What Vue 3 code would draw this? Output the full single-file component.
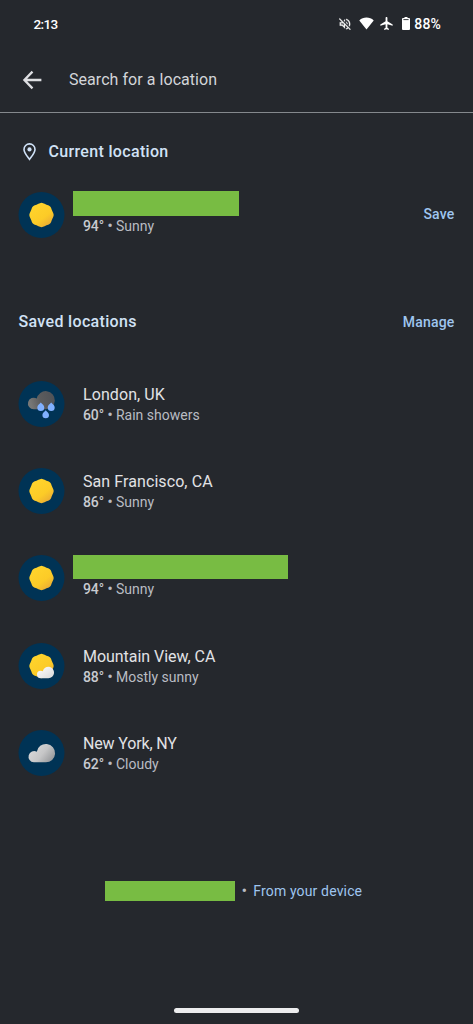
<script setup>
const sunPath = (() => {
  const pts = []
  for (let i = 0; i < 96; i++) {
    const a = (i / 96) * Math.PI * 2 - Math.PI / 2
    const r = 11.8 + 0.35 * Math.cos(8 * (a + Math.PI / 2))
    pts.push(`${(23 + r * Math.cos(a)).toFixed(2)} ${(23 + r * Math.sin(a)).toFixed(2)}`)
  }
  return `M${pts.join('L')}Z`
})()

const current = { kind: 'sun', temp: '94°', text: 'Sunny', w: 'w166' }
const saved = [
  { kind: 'rain', name: 'London, UK', temp: '60°', text: 'Rain showers', cls: 'london' },
  { kind: 'sun', name: 'San Francisco, CA', temp: '86°', text: 'Sunny', cls: 'sf' },
  { kind: 'sun', temp: '94°', text: 'Sunny', w: 'w215' },
  { kind: 'partly', name: 'Mountain View, CA', temp: '88°', text: 'Mostly sunny', cls: 'mv' },
  { kind: 'cloud', name: 'New York, NY', temp: '62°', text: 'Cloudy', cls: 'ny' },
]
</script>

<template>
  <div class="screen">
    <svg class="defs" width="0" height="0">
      <defs>
        <linearGradient id="gSun" x1="0.2" y1="0.1" x2="0.85" y2="0.95">
          <stop offset="0" stop-color="#ffd42c" /><stop offset="0.6" stop-color="#fccb27" /><stop offset="1" stop-color="#e9a936" />
        </linearGradient>
        <linearGradient id="gDark" gradientUnits="userSpaceOnUse" x1="12" y1="22" x2="36" y2="16">
          <stop offset="0" stop-color="#777776" /><stop offset="0.4" stop-color="#5c5c5d" /><stop offset="1" stop-color="#505257" />
        </linearGradient>
        <linearGradient id="gCloud" gradientUnits="userSpaceOnUse" x1="14" y1="16" x2="34" y2="32">
          <stop offset="0" stop-color="#d9d9da" /><stop offset="0.5" stop-color="#c6c6c7" /><stop offset="1" stop-color="#929497" />
        </linearGradient>
        <linearGradient id="gWhite" x1="0" y1="0" x2="1" y2="1">
          <stop offset="0" stop-color="#ffffff" /><stop offset="1" stop-color="#d8d8d8" />
        </linearGradient>
      </defs>
    </svg>

    <header class="status">
      <span class="time">2:13</span>
      <div class="tray">
        <svg class="mute" width="14" height="14" viewBox="0 0 24 24" fill="#f1f1f1" stroke="#f1f1f1" stroke-width="0.4">
          <path d="M3 2.2 1.7 3.5 7 8.8H3v6h4l5 5v-6.1l4.3 4.3c-.7.5-1.4.9-2.3 1.1v2.1c1.4-.3 2.6-1 3.7-1.8l2.8 2.8 1.3-1.3zM10 15l-2.2-2.2H5v-2h4l1 1zM12 4 9.9 6.1 12 8.2zM14 3.2v2.1c2.9.9 5 3.5 5 6.7 0 .9-.2 1.8-.5 2.6l1.5 1.5c.6-1.2 1-2.6 1-4.100 0-4.300-3-7.900-7-8.800zM14 8v2.200l2.400 2.400.1-.6c0-1.800-1-3.300-2.500-4z" />
        </svg>
        <svg class="wifi" width="15" height="13" viewBox="0 0 15 13" fill="#fff"><path d="M7.5 12.5.3 3.4C2.3 1.500 4.700.6 7.500.6s5.200.9 7.200 2.800z" /></svg>
        <svg class="plane" width="13" height="13" viewBox="2 2 20 20" fill="#fff"><path d="M21.500 15.500v-2L13.400 8.500V3.500C13.400 2.700 12.800 2 12 2s-1.400.7-1.400 1.500v5L2.500 13.500v2l8.100-2.500v5.500l-2.200 1.600V22l3.600-1 3.600 1v-1.900l-2.200-1.600V13z" /></svg>
        <svg class="battery" width="8" height="13" viewBox="0 0 8 13" fill="#fff"><path d="M2.500 0h3v1H7a1 1 0 0 1 1 1v10a1 1 0 0 1-1 1H1a1 1 0 0 1-1-1V2a1 1 0 0 1 1-1h1.500z" /><path d="M1.400 2.600h5.200" stroke="#25282d" stroke-width="0.9" /></svg>
        <span class="pct">88%</span>
      </div>
    </header>

    <div class="search">
      <svg class="back" width="20" height="20" viewBox="0 0 20 20" fill="none" stroke="#dedfe2" stroke-width="2.3"><path d="M10.500 1.600 2.400 10l8.100 8.400M2.200 10h17.200" /></svg>
      <span class="placeholder">Search for a location</span>
    </div>

    <div class="heading first">
      <svg class="pin" width="13" height="18" viewBox="0 0 13 18" fill="none"><path d="M6.500.9A5.500 5.500 0 0 0 1 6.400c0 3.300 2.900 6.300 5.500 9.900 2.600-3.600 5.500-6.600 5.500-9.900A5.500 5.500 0 0 0 6.500.9z" stroke="#cfe1f7" stroke-width="1.6" /><circle cx="6.5" cy="6.4" r="2.1" fill="#cfe1f7" /></svg>
      <h2>Current location</h2>
    </div>

    <div class="row current">
      <svg class="icon" width="47" height="46" viewBox="-0.5 0 47 46"><circle cx="23" cy="23" r="23" fill="#003355" /><path :d="sunPath" fill="url(#gSun)" /></svg>
      <div class="info">
        <div class="name"><div class="block" :class="current.w"></div></div>
        <div class="sub"><b>{{ current.temp }}</b><i>•</i><span>{{ current.text }}</span></div>
      </div>
      <a class="link save">Save</a>
    </div>

    <div class="heading second">
      <h2>Saved locations</h2>
      <a class="link">Manage</a>
    </div>

    <div class="list">
      <div v-for="(r, i) in saved" :key="i" class="row">
        <svg class="icon" width="47" height="46" viewBox="-0.5 0 47 46">
          <circle cx="23" cy="23" r="23" fill="#003355" />
          <path v-if="r.kind === 'sun' || r.kind === 'partly'" :d="sunPath" fill="url(#gSun)" />
          <path v-if="r.kind === 'partly'" d="M22.2 35.2a3.7 3.7 0 0 1 0-7.4c.8 0 1.5.2 2.1.5a5.7 5.7 0 1 1 5.5 6.9z" fill="url(#gWhite)" />
          <path v-if="r.kind === 'cloud'" d="M15.300 32.300a5.600 5.600 0 1 1 3-10.500 9.200 9.200 0 1 1 8.900 10.500z" fill="url(#gCloud)" />
          <g v-if="r.kind === 'rain'">
            <path d="M15.300 28.300a5.800 5.800 0 1 1 3-10.700 9.100 9.100 0 1 1 8.900 10.700z" fill="url(#gDark)" />
            <g fill="#80b0ff">
              <path d="M22.300 21.500c1.500 1.700 3.500 3 3.500 4.900a3.500 3.500 0 0 1-7 0c0-1.900 2-3.200 3.500-4.900z" />
              <path d="M32.700 21.500c1.500 1.700 3.500 3 3.500 4.900a3.500 3.500 0 0 1-7 0c0-1.900 2-3.200 3.500-4.900z" />
              <path d="M27.200 29.200c1.500 1.700 3.300 3 3.300 4.700a3.300 3.300 0 0 1-6.600 0c0-1.700 1.800-3 3.300-4.700z" />
            </g>
          </g>
        </svg>
        <div class="info">
          <div class="name" :class="r.cls"><template v-if="r.name">{{ r.name }}</template><div v-else class="block" :class="r.w"></div></div>
          <div class="sub"><b>{{ r.temp }}</b><i>•</i><span>{{ r.text }}</span></div>
        </div>
      </div>
    </div>

    <footer class="source">
      <div class="chip"></div>
      <span class="dot">•</span>
      <a class="device">From your device</a>
    </footer>
    <div class="home"></div>
  </div>
</template>

<style>
html, body { background: #25282d; }
</style>

<style scoped>
.screen {
  width: 473px; height: 1024px; box-sizing: border-box; overflow: hidden;
  background: #25282d; color: #e1e2e5;
  font-family: Roboto, "Liberation Sans", sans-serif;
  display: flex; flex-direction: column;
}
.defs { position: absolute; }
.status { height: 47px; flex: none; display: flex; align-items: center; justify-content: space-between; padding: 0 32px 0 33.5px; color: #fff; }
.time { font-size: 13.5px; font-weight: 500; letter-spacing: -0.6px; }
.tray { display: flex; align-items: center; }
.mute { margin-right: 7px; }
.wifi { margin-right: 6px; }
.plane { margin-right: 9px; }
.battery { margin-right: 4.5px; }
.pct { font-size: 14px; font-weight: 500; letter-spacing: 0.15px; }
.search { height: 65px; flex: none; display: flex; align-items: center; padding-left: 22px; border-bottom: 1px solid #85898d; }
.back { margin-right: 27px; }
.placeholder { font-size: 16px; color: #d3d5d9; letter-spacing: 0.05px; }
.heading { display: flex; align-items: center; height: 24px; flex: none; padding: 0 18.5px; }
.first { margin-top: 27px; }
.second { margin-top: 72px; }
.pin { margin: 0 13px 0 4px; }
h2 { margin: 0; font-size: 16px; font-weight: 500; line-height: 24px; color: #d1e2f5; letter-spacing: 0.33px; }
.link { margin-left: auto; font-size: 14px; font-weight: 500; color: #9fc5ef; letter-spacing: 0.2px; }
.save { margin-top: -2px; }
.row { display: flex; align-items: center; height: 87.4px; padding: 0 18.5px 0 18px; }
.current { height: 46px; flex: none; margin-top: 28px; }
.list { margin-top: 26px; flex: none; }
.icon { flex: none; display: block; }
.info { margin-left: 18px; margin-top: -1.2px; }
.name { font-size: 16px; line-height: 24px; height: 22px; white-space: nowrap; }
.london { letter-spacing: 0.08px; }
.sf { letter-spacing: 0.08px; }
.mv { letter-spacing: -0.04px; }
.ny { letter-spacing: -0.15px; }
.sub { display: flex; font-size: 14px; line-height: 20px; height: 19px; color: #b9bcc3; white-space: nowrap; }
.sub b { font-weight: 500; color: #c8cad0; letter-spacing: -0.1px; }
.sub i { font-style: normal; font-weight: 700; width: 12px; text-align: center; }
.block { position: relative; top: -2.7px; height: 24.5px; margin-left: -10.5px; background: #78bc43; }
.w166 { width: 166.5px; }
.w215 { width: 215px; }
.source { display: flex; align-items: center; justify-content: center; height: 20px; flex: none; margin-top: 84px; padding-right: 6px; }
.chip { width: 130.5px; height: 20px; background: #78bc43; }
.dot { width: 18px; text-align: center; font-size: 14px; font-weight: 700; color: #b9bcc3; }
.device { font-size: 14px; color: #9fc5ef; letter-spacing: 0.15px; }
.home { width: 125px; height: 5px; border-radius: 3px; background: #ededee; margin: auto auto 11px 174px; flex: none; }
</style>
